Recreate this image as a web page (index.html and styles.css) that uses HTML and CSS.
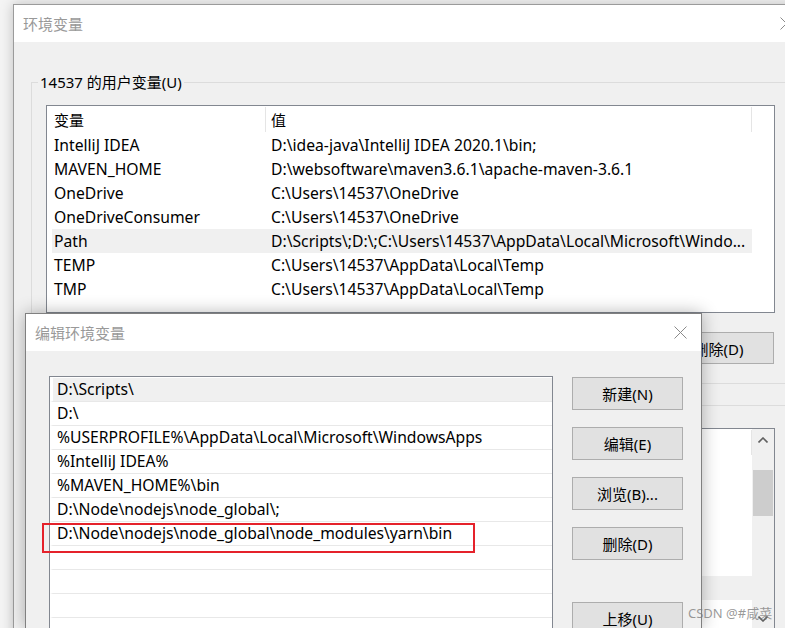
FILE: index.html
```html
<!DOCTYPE html>
<html lang="zh-CN">

<head>
    <meta charset="UTF-8">
    <meta name="viewport" content="width=device-width, initial-scale=1.0">
    <title>环境变量</title>
    <link rel="stylesheet" href="styles.css">
</head>

<body>
    <!-- 环境变量 -->
    <div class="window env-window">
        <div class="title-bar">
            <span class="title">环境变量</span>
            <svg class="close" viewBox="0 0 13 13"><path d="M0.5 0.5L12.5 12.5M12.5 0.5L0.5 12.5" /></svg>
        </div>
        <div class="env-body">
            <div class="group">
                <span class="group-label">14537 的用户变量(U)</span>
                <div class="list-view user-list">
                    <div class="lv-header">
                        <div class="lv-col">变量</div>
                        <div class="lv-col">值</div>
                    </div>
                    <div class="lv-row"><span class="name">IntelliJ IDEA</span><span class="value">D:\idea-java\IntelliJ IDEA 2020.1\bin;</span></div>
                    <div class="lv-row"><span class="name">MAVEN_HOME</span><span class="value">D:\websoftware\maven3.6.1\apache-maven-3.6.1</span></div>
                    <div class="lv-row"><span class="name">OneDrive</span><span class="value">C:\Users\14537\OneDrive</span></div>
                    <div class="lv-row"><span class="name">OneDriveConsumer</span><span class="value">C:\Users\14537\OneDrive</span></div>
                    <div class="lv-row selected"><span class="name">Path</span><span class="value">D:\Scripts\;D:\;C:\Users\14537\AppData\Local\Microsoft\Windo...</span></div>
                    <div class="lv-row"><span class="name">TEMP</span><span class="value">C:\Users\14537\AppData\Local\Temp</span></div>
                    <div class="lv-row"><span class="name">TMP</span><span class="value">C:\Users\14537\AppData\Local\Temp</span></div>
                </div>
                <div class="btn-row">
                    <button class="btn">新建(N)...</button>
                    <button class="btn">编辑(E)...</button>
                    <button class="btn">删除(D)</button>
                </div>
            </div>

            <!-- 系统变量: only the right edge shows behind the edit dialog -->
            <div class="group sys-group">
                <div class="list-view sys-list">
                    <div class="lv-content">
                        <div class="lv-header">
                            <div class="lv-col"></div>
                            <div class="lv-col"></div>
                        </div>
                        <div class="lv-row"></div>
                        <div class="lv-row"></div>
                        <div class="lv-row"></div>
                        <div class="lv-row"></div>
                        <div class="lv-row"></div>
                        <div class="lv-row selected"></div>
                        <div class="lv-row"></div>
                    </div>
                    <div class="scrollbar">
                        <div class="sb-btn"><svg viewBox="0 0 10 6"><path d="M0.5 5.5L5 1L9.5 5.5" /></svg></div>
                        <div class="sb-track"><div class="sb-thumb"></div></div>
                        <div class="sb-btn"><svg viewBox="0 0 10 6"><path d="M0.5 0.5L5 5L9.5 0.5" /></svg></div>
                    </div>
                </div>
            </div>
        </div>
    </div>

    <!-- 编辑环境变量 -->
    <div class="window edit-window">
        <div class="title-bar">
            <span class="title">编辑环境变量</span>
            <svg class="close" viewBox="0 0 13 13"><path d="M0.5 0.5L12.5 12.5M12.5 0.5L0.5 12.5" /></svg>
        </div>
        <div class="edit-body">
            <div class="path-list">
                <div class="path-row selected">D:\Scripts\</div>
                <div class="path-row">D:\</div>
                <div class="path-row">%USERPROFILE%\AppData\Local\Microsoft\WindowsApps</div>
                <div class="path-row">%IntelliJ IDEA%</div>
                <div class="path-row">%MAVEN_HOME%\bin</div>
                <div class="path-row">D:\Node\nodejs\node_global\;</div>
                <div class="path-row">D:\Node\nodejs\node_global\node_modules\yarn\bin</div>
                <div class="path-row"></div>
                <div class="path-row"></div>
                <div class="path-row"></div>
                <div class="path-row"></div>
            </div>
            <div class="side-buttons">
                <button class="btn">新建(N)</button>
                <button class="btn">编辑(E)</button>
                <button class="btn">浏览(B)...</button>
                <button class="btn">删除(D)</button>
                <button class="btn btn-gap">上移(U)</button>
            </div>
        </div>
        <div class="mark"></div>
    </div>

    <div class="watermark">CSDN @#咸菜</div>
</body>

</html>
```

FILE: styles.css
```css
* {
    box-sizing: border-box;
}

body {
    margin: 0;
    width: 785px;
    height: 628px;
    overflow: hidden;
    position: relative;
    background-color: #f4f4f4;
    font-family: "Noto Sans", "Noto Sans CJK SC", sans-serif;
    font-size: 15px;
    color: #000;
}

/* windows */

.window {
    position: absolute;
    background-color: #f0f0f0;
    border: 1px solid #9b9b9b;
    box-shadow: 0 0 12px rgba(0, 0, 0, 0.22);
}

.env-window {
    left: 13px;
    top: 4px;
    width: 795px;
    height: 640px;
}

.edit-window {
    left: 25px;
    top: 313px;
    width: 677px;
    height: 315px;
    border-color: #808080;
    border-bottom: none;
    box-shadow: 0 0 16px rgba(0, 0, 0, 0.3);
    overflow: hidden;
}

.title-bar {
    height: 37px;
    background-color: #fff;
    display: flex;
    align-items: center;
    justify-content: space-between;
    padding: 0 14px 0 9px;
}

.title {
    color: #999;
}

.close {
    width: 13px;
    height: 13px;
    fill: none;
    stroke: #8a8a8a;
    stroke-width: 1;
}

/* group boxes */

.env-body {
    padding: 40px 0 0 17px;
}

.group {
    position: relative;
    width: 770px;
    border: 1px solid #dcdcdc;
    padding: 22px 0 19px 14px;
}

.group-label {
    position: absolute;
    left: 6px;
    top: -11px;
    line-height: 20px;
    padding: 0 2px;
    background-color: #f0f0f0;
}

.sys-group {
    margin-top: 21px;
}

/* list views */

.list-view {
    width: 729px;
    height: 208px;
    background-color: #fff;
    border: 1px solid #828790;
}

.lv-header,
.lv-row {
    display: grid;
    grid-template-columns: 214px 486px;
    margin-left: 5px;
    width: 700px;
}

.lv-header {
    height: 27px;
}

.lv-col {
    border-right: 1px solid #e5e5e5;
    margin: 1px 0;
    padding: 1px 0 0 2px;
    line-height: 24px;
}

.lv-col + .lv-col {
    padding-left: 5px;
}

.lv-row {
    height: 24px;
    line-height: 24px;
    font-size: 15.7px;
    white-space: nowrap;
}

.lv-row .name {
    padding-left: 2px;
    overflow: hidden;
}

.lv-row .value {
    padding-left: 5px;
    overflow: hidden;
}

.lv-row.selected {
    background-color: #f0f0f0;
}

.sys-list {
    height: 203px;
    display: flex;
}

.lv-content {
    flex: 1;
    overflow: hidden;
}

.scrollbar {
    width: 22px;
    background-color: #f0f0f0;
    display: flex;
    flex-direction: column;
}

.sb-btn {
    height: 22px;
    display: flex;
    align-items: center;
    justify-content: center;
}

.sb-btn svg {
    width: 10px;
    height: 6px;
    fill: none;
    stroke: #606060;
    stroke-width: 1.6;
}

.sb-track {
    flex: 1;
    padding: 19px 1px 0;
}

.sb-thumb {
    height: 46px;
    background-color: #cdcdcd;
}

/* buttons */

.btn {
    width: 111px;
    height: 33px;
    padding: 0;
    background-color: #e1e1e1;
    border: 1px solid #adadad;
    font: inherit;
    color: #000;
}

.btn-row {
    width: 729px;
    margin-top: 19px;
    padding-right: 1px;
    display: flex;
    justify-content: flex-end;
    gap: 10px;
}

.btn-row .btn {
    height: 32px;
}

/* edit dialog */

.edit-body {
    display: flex;
    padding: 25px 0 0 23px;
}

.path-list {
    width: 504px;
    height: 290px;
    flex-shrink: 0;
    background-color: #fff;
    border: 1px solid #828790;
    padding-top: 1px;
}

.path-row {
    height: 24px;
    line-height: 23px;
    font-size: 15.7px;
    border-bottom: 1px solid #e8e8e8;
    border-left: 3px solid #fff;
    padding-left: 4px;
    white-space: nowrap;
}

.path-row.selected {
    background-color: #f0f0f0;
}

.side-buttons {
    display: flex;
    flex-direction: column;
    gap: 17px;
    margin: 1px 0 0 19px;
}

.btn-gap {
    margin-top: 25px;
}

.mark {
    position: absolute;
    left: 16px;
    top: 209px;
    width: 433px;
    height: 30px;
    border: 2px solid #e5222b;
}

.watermark {
    position: absolute;
    left: 688px;
    top: 603px;
    font-size: 13px;
    color: rgba(120, 120, 120, 0.75);
}
```
